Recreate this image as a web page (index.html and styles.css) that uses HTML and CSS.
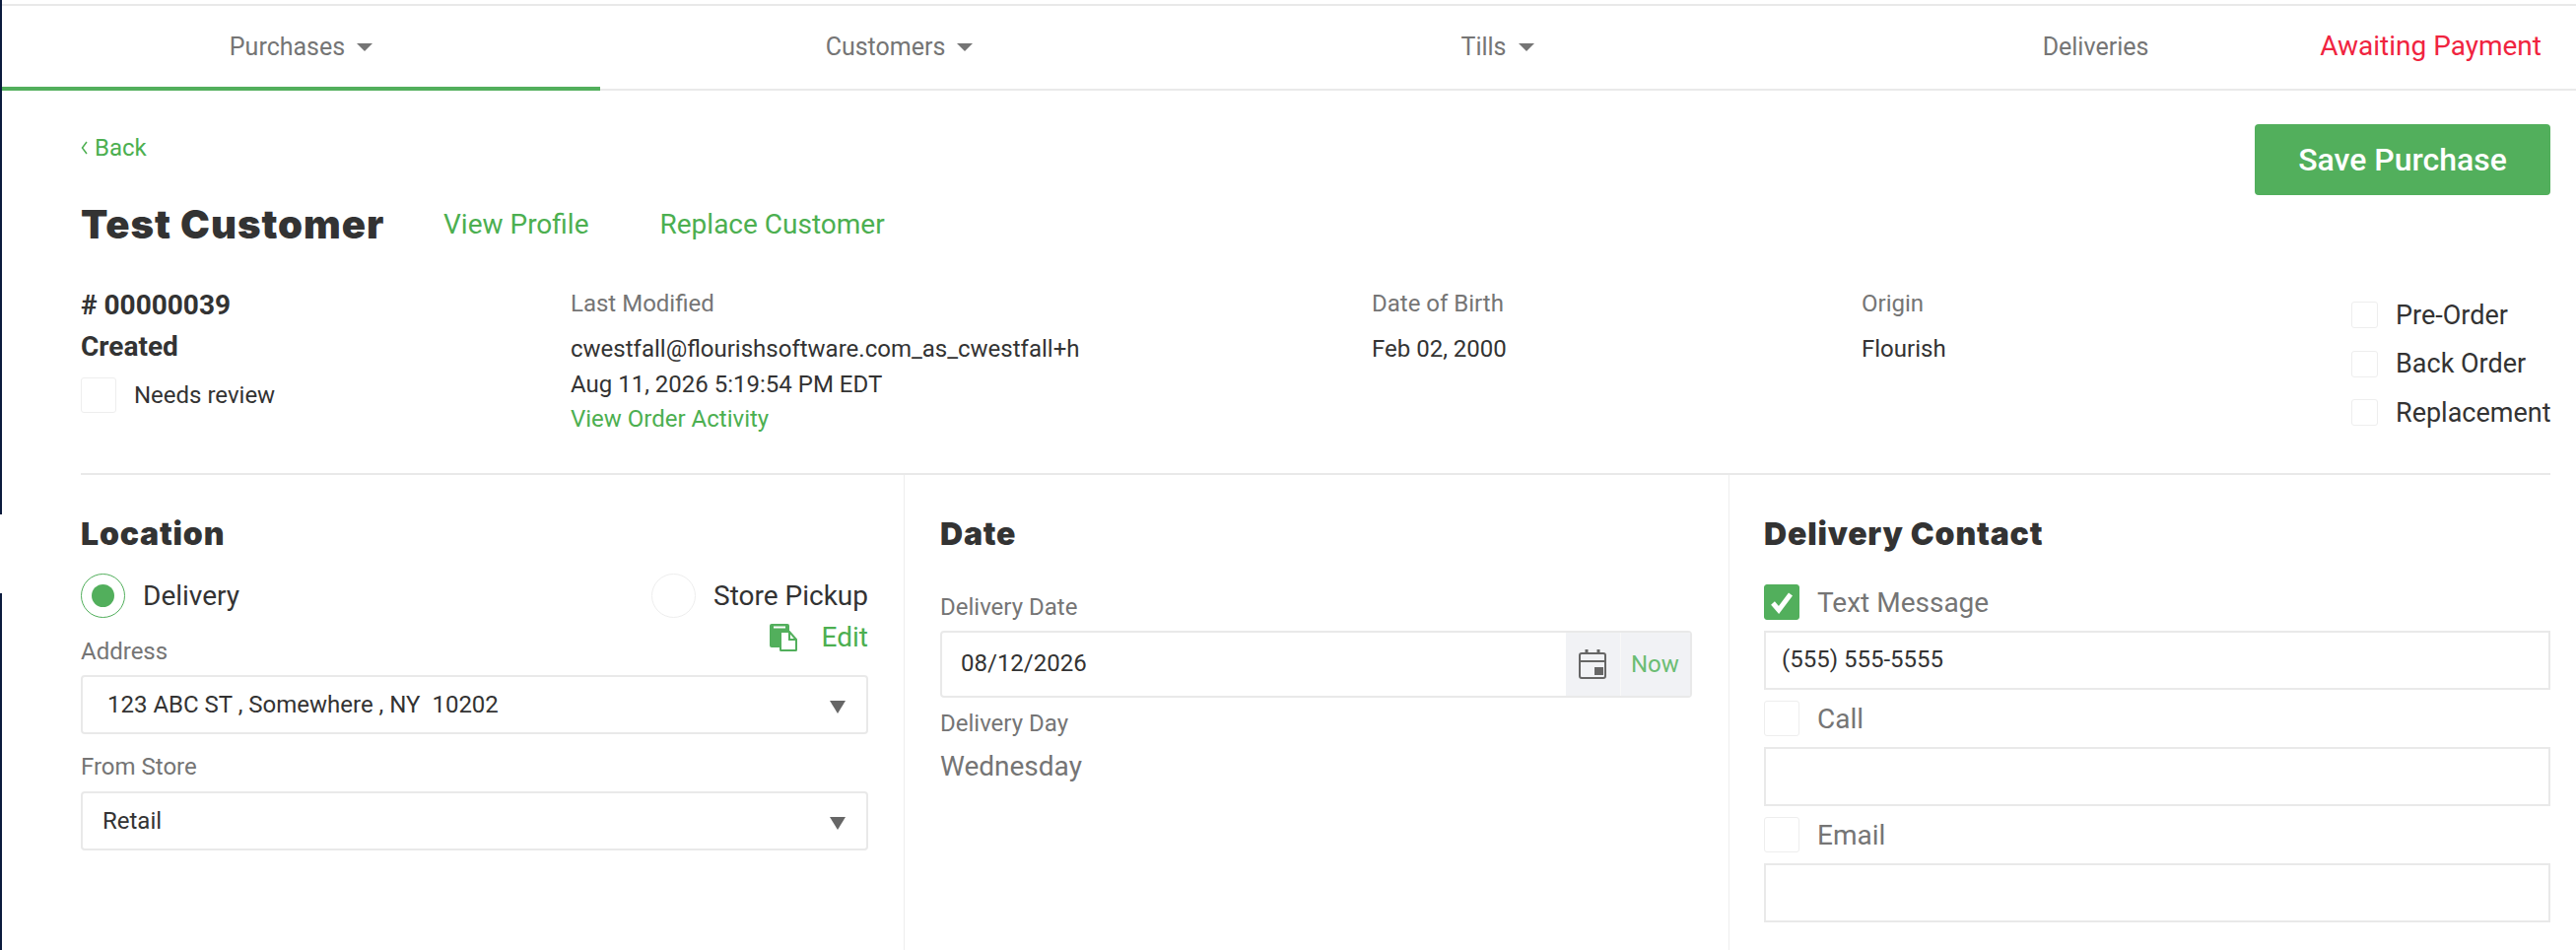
FILE: index.html
```html
<!DOCTYPE html>
<html>

<head>
     <title>Purchase</title>
     <link rel="stylesheet" href="styles.css">
</head>

<body>
     <nav class="tabs">
          <a class="tab active">Purchases <span class="caret"></span></a>
          <a class="tab">Customers <span class="caret"></span></a>
          <a class="tab">Tills <span class="caret"></span></a>
          <a class="tab">Deliveries</a>
          <span class="status">Awaiting Payment</span>
     </nav>

     <main class="content">
          <div class="header">
               <div>
                    <a class="back">
                         <svg width="7" height="14" viewBox="0 0 7 14">
                              <path d="M6 1L1.500 7 6 13" fill="none" stroke="#4caf50" stroke-width="1.500" />
                         </svg>
                         Back
                    </a>
                    <div class="title-row">
                         <h1 class="customer">Test Customer</h1>
                         <a class="title-link first">View Profile</a>
                         <a class="title-link">Replace Customer</a>
                    </div>
               </div>
               <button class="save">Save Purchase</button>
          </div>

          <div class="meta">
               <div>
                    <div class="order-no"># 00000039</div>
                    <div class="order-state">Created</div>
                    <label class="check-row review"><span class="box"></span>Needs review</label>
               </div>
               <div>
                    <div class="meta-label">Last Modified</div>
                    <div class="meta-value">cwestfall@flourishsoftware.com_as_cwestfall+h</div>
                    <div class="meta-value">Aug 11, 2026 5:19:54 PM EDT</div>
                    <a class="meta-value link">View Order Activity</a>
               </div>
               <div>
                    <div class="meta-label">Date of Birth</div>
                    <div class="meta-value">Feb 02, 2000</div>
               </div>
               <div>
                    <div class="meta-label">Origin</div>
                    <div class="meta-value">Flourish</div>
               </div>
               <div class="flags">
                    <label class="flag"><span class="box small"></span>Pre-Order</label>
                    <label class="flag"><span class="box small"></span>Back Order</label>
                    <label class="flag"><span class="box small"></span>Replacement</label>
               </div>
          </div>

          <div class="sections">
               <section class="section">
                    <h2>Location</h2>
                    <div class="radios">
                         <label class="radio-row"><span class="radio on"></span>Delivery</label>
                         <label class="radio-row"><span class="radio"></span>Store Pickup</label>
                    </div>
                    <div class="address-head">
                         <span class="field-label">Address</span>
                         <a class="edit">
                              <svg width="28" height="28" viewBox="0 0 28 28">
                                   <path d="M2 0h16a2 2 0 0 1 2 2v22H2a2 2 0 0 1-2-2V2a2 2 0 0 1 2-2z" fill="#52af5c" />
                                   <rect x="4" y="2.5" width="12" height="2" fill="#fff" />
                                   <path d="M11 8h9l7 8v10.500a.5.5 0 0 1-.5.5h-15a.5.5 0 0 1-.5-.5z" fill="#fff" stroke="#52af5c" stroke-width="2" />
                                   <path d="M20 8v8h7" fill="none" stroke="#52af5c" stroke-width="2" />
                              </svg>
                              Edit
                         </a>
                    </div>
                    <div class="select address">123 ABC ST , Somewhere , NY &nbsp;10202<span class="arrow"></span></div>
                    <div class="field-label store-label">From Store</div>
                    <div class="select store">Retail<span class="arrow"></span></div>
               </section>

               <section class="section">
                    <h2>Date</h2>
                    <div class="field-label date-label">Delivery Date</div>
                    <div class="date-input">
                         <span class="date-value">08/12/2026</span>
                         <span class="addon cal">
                              <svg width="28" height="30" viewBox="0 0 28 30">
                                   <rect x="1" y="4" width="26" height="25" rx="2" fill="none" stroke="#666" stroke-width="2" />
                                   <path d="M1 12h26" stroke="#666" stroke-width="2" />
                                   <path d="M8 0v5M20 0v5" stroke="#666" stroke-width="3" />
                                   <rect x="16" y="18" width="9" height="8" fill="#666" />
                              </svg>
                         </span>
                         <span class="addon now">Now</span>
                    </div>
                    <div class="field-label day-label">Delivery Day</div>
                    <div class="day-value">Wednesday</div>
               </section>

               <section class="section">
                    <h2>Delivery Contact</h2>
                    <label class="contact-row first">
                         <span class="box checked">
                              <svg width="24" height="24" viewBox="0 0 24 24">
                                   <path d="M3 13l6 7L21 4" fill="none" stroke="#fff" stroke-width="5" />
                              </svg>
                         </span>
                         Text Message
                    </label>
                    <div class="text-input">(555) 555-5555</div>
                    <label class="contact-row"><span class="box"></span>Call</label>
                    <div class="text-input"></div>
                    <label class="contact-row"><span class="box"></span>Email</label>
                    <div class="text-input"></div>
               </section>
          </div>
     </main>
</body>

</html>
```

FILE: styles.css
```css
* {
     box-sizing: border-box;
}

body {
     margin: 0;
     padding: 4px 0 0 2px;
     height: 964px;
     overflow: hidden;
     font-family: Roboto, Arial, sans-serif;
     font-size: 24px;
     color: #333;
     background: #fff linear-gradient(#0b1b3d 0 522px, transparent 522px 602px, #0b1b3d 602px) 0 0 / 2px 100% no-repeat;
}

/* tabs */

.tabs {
     display: flex;
     height: 88px;
     border-top: 2px solid #e9e9e9;
     border-bottom: 2px solid #e9e9e9;
}

.tab {
     display: flex;
     flex: none;
     align-items: center;
     justify-content: center;
     gap: 12px;
     width: 607px;
     height: 86px;
     padding-bottom: 4px;
     font-size: 25px;
     color: #757575;
}

.tab.active {
     border-bottom: 4px solid #52af5c;
     padding-bottom: 0;
}

.caret {
     border-left: 8px solid transparent;
     border-right: 8px solid transparent;
     border-top: 8px solid #757575;
     margin-top: 2px;
}

.status {
     display: flex;
     flex: 1;
     justify-content: flex-end;
     min-width: 0;
     padding-right: 35px;
     white-space: nowrap;
     line-height: 82px;
     font-size: 28px;
     color: #f0243f;
}

/* header */

.content {
     padding: 0 26px 0 80px;
}

.header {
     display: flex;
     justify-content: space-between;
     align-items: flex-start;
     height: 160px;
}

a {
     color: #4caf50;
}

.back {
     display: flex;
     align-items: center;
     gap: 7px;
     margin-top: 44px;
     line-height: 28px;
}

.title-row {
     display: flex;
     align-items: center;
     height: 50px;
     margin-top: 38px;
}

.customer {
     margin: 0;
     width: 368px;
     font-family: Inter, sans-serif;
     font-size: 40px;
     font-weight: 900;
     letter-spacing: 1px;
}

.title-link {
     margin-right: 72px;
     font-size: 28px;
}

.save {
     width: 300px;
     height: 72px;
     margin-top: 34px;
     border: none;
     border-radius: 4px;
     background-color: #52af5c;
     color: #fff;
     font-family: Roboto, sans-serif;
     font-size: 32px;
     font-weight: 500;
}

/* order info */

.meta {
     display: grid;
     grid-template-columns: 497px 813px 497px 497px 202px;
     height: 230px;
     padding-top: 41px;
     border-bottom: 2px solid #e9e9e9;
}

.order-no {
     line-height: 34px;
     font-size: 28px;
     font-weight: 700;
}

.order-state {
     margin-top: 8px;
     line-height: 34px;
     font-size: 28px;
     font-weight: 700;
}

.check-row {
     display: flex;
     align-items: center;
     gap: 18px;
}

.review {
     margin-top: 14px;
}

.box {
     display: flex;
     align-items: center;
     justify-content: center;
     flex: none;
     width: 36px;
     height: 36px;
     border: 1px solid #eee;
     border-radius: 3px;
     background-color: #fff;
}

.box.small {
     width: 27px;
     height: 27px;
}

.box.checked {
     border-color: #52af5c;
     background-color: #52af5c;
}

.meta-label {
     line-height: 30px;
     color: #757575;
}

.meta-value {
     display: block;
     line-height: 35.5px;
}

.meta-label + .meta-value {
     margin-top: 14px;
}

.meta-value.link {
     color: #4caf50;
}

.flags {
     display: flex;
     flex-direction: column;
     gap: 22.500px;
     padding-top: 13px;
}

.flag {
     display: flex;
     align-items: center;
     gap: 18px;
     height: 27px;
     font-size: 27px;
     white-space: nowrap;
}

/* three columns */

.sections {
     display: grid;
     grid-template-columns: 836px 837px 1fr;
}

.section {
     height: 482px;
     padding: 40px 37px 0 36px;
     border-right: 1px solid #eee;
}

.section:first-child {
     padding-left: 0;
     padding-right: 36px;
}

.section:last-child {
     padding-right: 0;
     padding-left: 35px;
     border-right: none;
}

h2 {
     margin: 0;
     line-height: 40px;
     font-family: Inter, sans-serif;
     font-size: 32px;
     font-weight: 900;
     letter-spacing: .8px;
}

.radios {
     display: flex;
     justify-content: space-between;
     margin-top: 20px;
}

.radio-row {
     display: flex;
     align-items: center;
     gap: 18px;
     height: 45px;
     font-size: 28px;
}

.radio {
     display: flex;
     align-items: center;
     justify-content: center;
     width: 45px;
     height: 45px;
     border: 1px solid #eee;
     border-radius: 50%;
}

.radio.on {
     border-color: #52af5c;
}

.radio.on::after {
     content: "";
     width: 23px;
     height: 23px;
     border-radius: 50%;
     background-color: #52af5c;
}

.address-head {
     display: flex;
     justify-content: space-between;
     align-items: flex-start;
     height: 43px;
     margin-top: 6px;
}

.field-label {
     display: block;
     line-height: 30px;
     color: #757575;
}

.address-head .field-label {
     margin-top: 13px;
}

.edit {
     display: flex;
     align-items: center;
     gap: 25px;
     font-size: 28px;
     line-height: 28px;
}

.select {
     position: relative;
     display: flex;
     align-items: center;
     height: 60px;
     margin-top: 9px;
     border: 2px solid #e9e9e9;
     border-radius: 4px;
}

.select.address {
     padding-left: 25px;
}

.select.store {
     padding-left: 20px;
     margin-top: 10px;
}

.arrow {
     position: absolute;
     right: 21px;
     top: 24px;
     border-left: 8px solid transparent;
     border-right: 8px solid transparent;
     border-top: 13px solid #666;
}

.store-label {
     margin-top: 18px;
}

.date-label {
     margin-top: 39px;
}

.date-input {
     display: flex;
     height: 68px;
     margin-top: 9px;
     border: 2px solid #e9e9e9;
     border-radius: 4px;
}

.date-value {
     flex: 1;
     padding-left: 19px;
     line-height: 62px;
}

.addon {
     display: flex;
     align-items: center;
     background-color: #f1f2f5;
}

.addon.cal {
     width: 56px;
     padding-left: 13px;
     border-right: 1px solid #f8f8f8;
}

.addon.now {
     width: 70px;
     padding-left: 10px;
     color: #6bbd73;
}

.day-label {
     margin-top: 11px;
}

.day-value {
     margin-top: 11px;
     line-height: 36px;
     font-size: 28px;
     color: #757575;
}

.contact-row {
     display: flex;
     align-items: center;
     gap: 18px;
     height: 36px;
     margin-top: 11px;
     font-size: 28px;
     color: #757575;
}

.contact-row.first {
     margin-top: 31px;
}

.text-input {
     height: 60px;
     margin-top: 11px;
     padding-left: 16px;
     line-height: 54px;
     border: 2px solid #e9e9e9;
}
```
